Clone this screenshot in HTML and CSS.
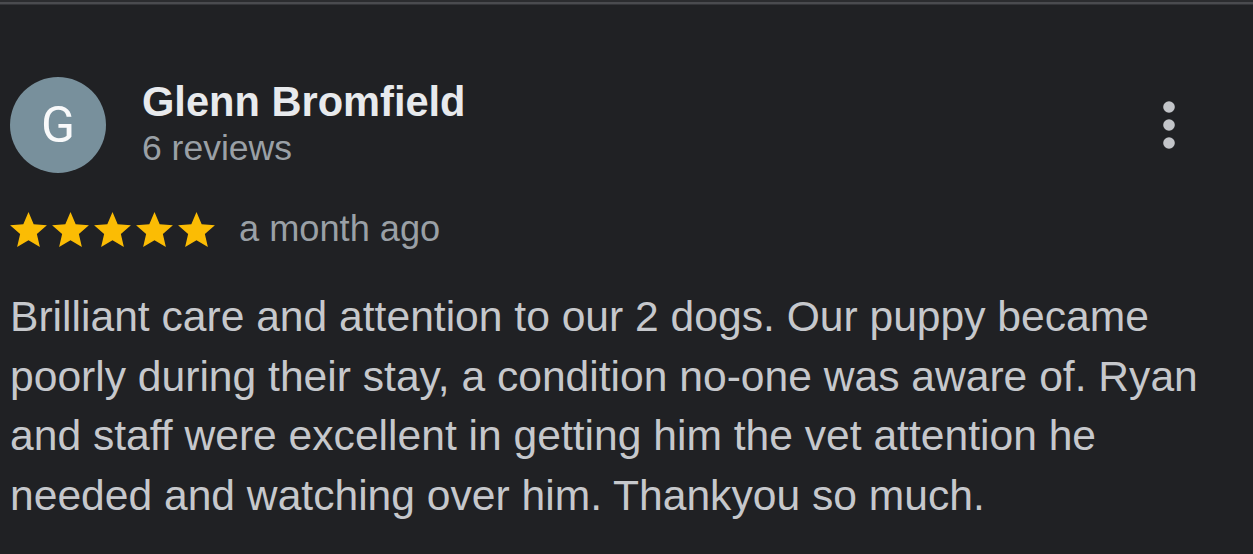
FILE: index.html
```html
<!DOCTYPE html>
<html lang="en">
<head>
<meta charset="utf-8">
<title>Review</title>
<link rel="stylesheet" href="styles.css">
</head>
<body>
<div class="topbar"></div>
<div class="review">
  <div class="header">
    <div class="avatar">G</div>
    <div class="info">
      <div class="name">Glenn Bromfield</div>
      <div class="count">6 reviews</div>
    </div>
    <div class="menu">
      <svg width="12" height="48" viewBox="0 0 12 48" aria-hidden="true">
        <circle cx="6" cy="6" r="5.8" fill="#c3c5c9"/>
        <circle cx="6" cy="24" r="5.8" fill="#c3c5c9"/>
        <circle cx="6" cy="42" r="5.8" fill="#c3c5c9"/>
      </svg>
    </div>
  </div>
  <div class="meta">
    <div class="stars">
      <svg class="star" viewBox="2 2 20 19"><path d="M12 17.27L18.18 21l-1.64-7.03L22 9.24l-7.19-.61L12 2 9.19 8.63 2 9.24l5.46 4.73L5.82 21z"/></svg>
      <svg class="star" viewBox="2 2 20 19"><path d="M12 17.27L18.18 21l-1.64-7.03L22 9.24l-7.19-.61L12 2 9.19 8.63 2 9.24l5.46 4.73L5.82 21z"/></svg>
      <svg class="star" viewBox="2 2 20 19"><path d="M12 17.27L18.18 21l-1.64-7.03L22 9.24l-7.19-.61L12 2 9.19 8.63 2 9.24l5.46 4.73L5.82 21z"/></svg>
      <svg class="star" viewBox="2 2 20 19"><path d="M12 17.27L18.18 21l-1.64-7.03L22 9.24l-7.19-.61L12 2 9.19 8.63 2 9.24l5.46 4.73L5.82 21z"/></svg>
      <svg class="star" viewBox="2 2 20 19"><path d="M12 17.27L18.18 21l-1.64-7.03L22 9.24l-7.19-.61L12 2 9.19 8.63 2 9.24l5.46 4.73L5.82 21z"/></svg>
    </div>
    <span class="date">a month ago</span>
  </div>
  <p class="text">Brilliant care and attention to our 2 dogs. Our puppy became poorly during their stay, a condition no-one was aware of. Ryan and staff were excellent in getting him the vet attention he needed and watching over him. Thankyou so much.</p>
</div>
</body>
</html>
```

FILE: styles.css
```css
html, body {
  margin: 0;
  padding: 0;
  background: #202124;
  height: 100%;
  overflow: hidden;
}

body {
  font-family: "Liberation Sans", Arial, Helvetica, sans-serif;
}

.topbar {
  height: 2px;
  background: #2b2c2f;
  border-bottom: 2px solid #4a4b4f;
  box-shadow: 0 1px 0 #333438;
}

.review {
  padding: 0 10px;
}

.header {
  display: flex;
  align-items: flex-start;
  margin-top: 73px;
}

.avatar {
  width: 96px;
  height: 96px;
  border-radius: 50%;
  background: #78909c;
  color: #f8f9fa;
  font-family: Roboto, "Liberation Sans", sans-serif;
  font-size: 50px;
  line-height: 96px;
  text-align: center;
  flex: none;
}

.info {
  margin-left: 36px;
  flex: 1;
}

.name {
  font-weight: bold;
  font-size: 41.6px;
  line-height: 48px;
  color: #e8eaed;
  margin-top: 1px;
}

.count {
  font-size: 35.5px;
  line-height: 40px;
  color: #9aa0a6;
  margin-top: 2px;
}

.menu {
  align-self: center;
  width: 48px;
  height: 48px;
  margin-right: 50px;
  display: flex;
  justify-content: center;
  align-items: center;
}

.meta {
  display: flex;
  align-items: center;
  height: 40px;
  margin-top: 36px;
}

.stars {
  display: flex;
  gap: 5px;
}

.star {
  width: 37px;
  height: 35px;
  fill: #fbbc04;
  display: block;
}

.date {
  margin-left: 24px;
  font-size: 36.2px;
  line-height: 40px;
  color: #9aa0a6;
}

.text {
  margin: 38px 0 0;
  padding-right: 30px;
  font-size: 42.6px;
  line-height: 59.7px;
  color: #c6c8cc;
}
```
